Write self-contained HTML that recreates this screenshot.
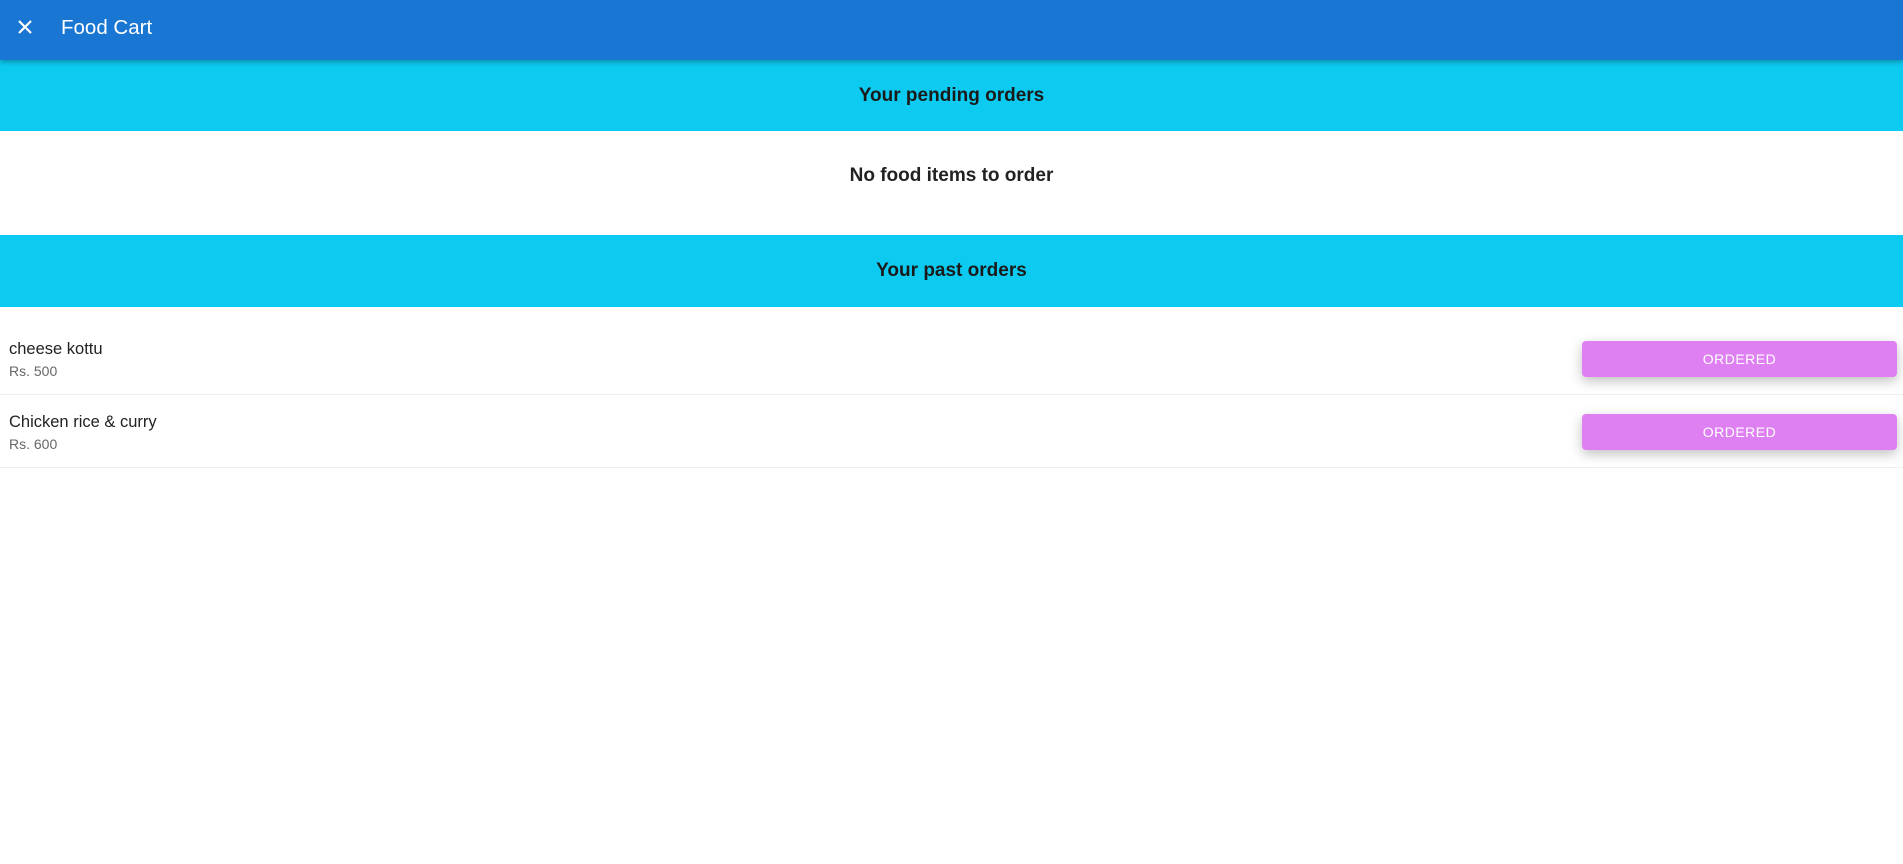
<!DOCTYPE html>
<html><head><style>
*{margin:0;padding:0;box-sizing:border-box}
body{width:1903px;height:864px;background:#fff;font-family:"Liberation Sans",sans-serif;position:relative;overflow:hidden}
.bar{position:absolute;left:0;top:0;width:1903px;height:60px;background:#1976d2;box-shadow:0 2px 5px rgba(0,0,0,.3);z-index:2}
.bar .t{position:absolute;left:61px;top:16px;color:#fff;font-size:20.5px}
.band{position:absolute;left:0;width:1903px;background:#0dcaf0;color:#1a1a1a;font-size:19px;font-weight:bold;text-align:center}
.msg{position:absolute;left:0;width:1903px;text-align:center;font-size:19px;font-weight:bold;color:#222}
.row{position:absolute;left:0;width:1903px;height:73px;border-bottom:1px solid #eee}
.row .n{position:absolute;left:9px;top:18px;font-size:16.5px;color:#222}
.row .p{position:absolute;left:9px;top:41px;font-size:14px;color:#666}
.btn{position:absolute;left:1582px;width:315px;height:36px;background:#df80f2;border-radius:4px;color:#fff;font-size:14px;text-align:center;line-height:36px;letter-spacing:.5px;box-shadow:0 4px 12px rgba(0,0,0,.25)}
</style></head><body>
<div class="bar">
<svg style="position:absolute;left:17px;top:19px" width="16" height="16" viewBox="0 0 16 16"><path d="M2 2L14 14M14 2L2 14" stroke="#fff" stroke-width="2.2"/></svg>
<div class="t">Food Cart</div>
</div>
<div class="band" style="top:60px;height:71px;line-height:72px">Your pending orders</div>
<div class="msg" style="top:165px">No food items to order</div>
<div class="band" style="top:235px;height:72px;line-height:72px">Your past orders</div>
<div class="row" style="top:322px"><div class="n">cheese kottu</div><div class="p">Rs. 500</div></div>
<div class="row" style="top:395px"><div class="n">Chicken rice &amp; curry</div><div class="p">Rs. 600</div></div>
<div class="btn" style="top:341px">ORDERED</div>
<div class="btn" style="top:414px">ORDERED</div>
</body></html>
